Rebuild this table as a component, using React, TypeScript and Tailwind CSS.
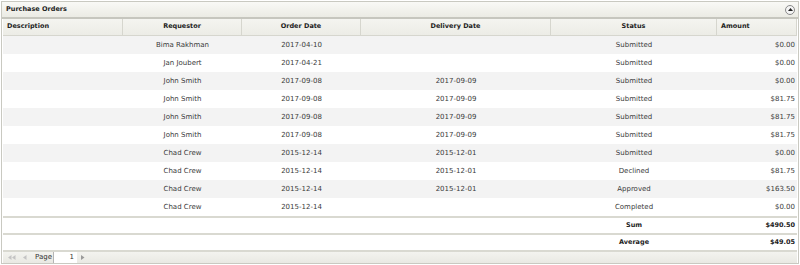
import React from 'react';

interface OrderRow {
  requestor: string;
  orderDate: string;
  deliveryDate: string;
  status: string;
  amount: string;
}

const rows: OrderRow[] = [
  { requestor: 'Bima Rakhman', orderDate: '2017-04-10', deliveryDate: '', status: 'Submitted', amount: '$0.00' },
  { requestor: 'Jan Joubert', orderDate: '2017-04-21', deliveryDate: '', status: 'Submitted', amount: '$0.00' },
  { requestor: 'John Smith', orderDate: '2017-09-08', deliveryDate: '2017-09-09', status: 'Submitted', amount: '$0.00' },
  { requestor: 'John Smith', orderDate: '2017-09-08', deliveryDate: '2017-09-09', status: 'Submitted', amount: '$81.75' },
  { requestor: 'John Smith', orderDate: '2017-09-08', deliveryDate: '2017-09-09', status: 'Submitted', amount: '$81.75' },
  { requestor: 'John Smith', orderDate: '2017-09-08', deliveryDate: '2017-09-09', status: 'Submitted', amount: '$81.75' },
  { requestor: 'Chad Crew', orderDate: '2015-12-14', deliveryDate: '2015-12-01', status: 'Submitted', amount: '$0.00' },
  { requestor: 'Chad Crew', orderDate: '2015-12-14', deliveryDate: '2015-12-01', status: 'Declined', amount: '$81.75' },
  { requestor: 'Chad Crew', orderDate: '2015-12-14', deliveryDate: '2015-12-01', status: 'Approved', amount: '$163.50' },
  { requestor: 'Chad Crew', orderDate: '2015-12-14', deliveryDate: '', status: 'Completed', amount: '$0.00' },
];

const cols = 'grid grid-cols-[120px_119px_119px_190px_166px_80px]';

const App: React.FC = () => {
  return (
    <div className="w-[800px] h-[265px] bg-white p-[1px] font-['DejaVu_Sans',sans-serif] text-[7px]">
      <div className="h-[263px] border border-[#c9c9c1] flex flex-col">
        {/* Title bar */}
        <div className="h-[17px] shrink-0 flex items-center justify-between pl-[4px] pr-[3px] bg-gradient-to-b from-[#f9f9f6] to-[#ebebe4] border-b-2 border-[#c6c6be]">
          <span className="font-bold text-[6.5px] text-[#222]">Purchase Orders</span>
          <span className="w-[10px] h-[10px] rounded-full border border-[#8a8a8a] bg-[#f4f4f4] flex items-center justify-center">
            <svg width="5" height="3" viewBox="0 0 5 3">
              <path d="M0 3 L2.5 0 L5 3 Z" fill="#222" />
            </svg>
          </span>
        </div>

        <div className="flex-1 flex flex-col px-[1px]">
          {/* Header */}
          <div className={`${cols} h-[17px] shrink-0 bg-gradient-to-b from-[#f4f4f0] to-[#ecece6] border-b border-[#d6d6ce] font-bold text-[6.5px] text-[#222]`}>
            <div className="pl-[4px] flex items-center border-r border-[#d6d6ce]">Description</div>
            <div className="flex items-center justify-center border-r border-[#d6d6ce]">Requestor</div>
            <div className="flex items-center justify-center border-r border-[#d6d6ce]">Order Date</div>
            <div className="flex items-center justify-center border-r border-[#d6d6ce]">Delivery Date</div>
            <div className="flex items-center justify-center border-r border-[#d6d6ce]">Status</div>
            <div className="pl-[4px] flex items-center border-r border-[#d6d6ce]">Amount</div>
          </div>

          {/* Rows */}
          {rows.map((r, idx) => (
            <div
              key={idx}
              className={`${cols} h-[18px] shrink-0 items-center text-[#3a3a3a] ${idx % 2 === 0 ? 'bg-[#f3f3f3]' : 'bg-white'}`}
            >
              <div></div>
              <div className="text-center">{r.requestor}</div>
              <div className="text-center">{r.orderDate}</div>
              <div className="text-center">{r.deliveryDate}</div>
              <div className="text-center">{r.status}</div>
              <div className="text-right pr-[2px]">{r.amount}</div>
            </div>
          ))}

          {/* Totals */}
          <div className={`${cols} h-[17px] shrink-0 items-center border-t-2 border-[#d9d9d1] font-bold text-[6.5px] text-[#222]`}>
            <div></div>
            <div></div>
            <div></div>
            <div></div>
            <div className="text-center">Sum</div>
            <div className="text-right pr-[2px]">$490.50</div>
          </div>
          <div className={`${cols} h-[17px] shrink-0 items-center border-t-2 border-[#d9d9d1] font-bold text-[6.5px] text-[#222]`}>
            <div></div>
            <div></div>
            <div></div>
            <div></div>
            <div className="text-center">Average</div>
            <div className="text-right pr-[2px]">$49.05</div>
          </div>

          {/* Pager */}
          <div className="flex-1 flex items-stretch pl-[5px] border-t-2 border-[#d9d9d1] bg-gradient-to-b from-[#f3f3ef] to-[#e9e9e3] text-[#333]">
            <div className="flex items-center">
              <svg width="8" height="5" viewBox="0 0 8 5">
                <path d="M0 2.5 L3.5 0 L3.5 5 Z M4 2.5 L7.5 0 L7.5 5 Z" fill="#c4c4c4" />
              </svg>
            </div>
            <div className="flex items-center ml-[7px]">
              <svg width="4" height="5" viewBox="0 0 4 5">
                <path d="M0 2.5 L3.5 0 L3.5 5 Z" fill="#c4c4c4" />
              </svg>
            </div>
            <span className="flex items-center ml-[8px]">Page</span>
            <span className="w-[24px] ml-[1px] bg-white border-l border-[#b5b5b5] flex items-center justify-end pr-[3px]">1</span>
            <div className="flex items-center ml-[4px]">
              <svg width="4" height="5" viewBox="0 0 4 5">
                <path d="M0 0 L3.5 2.5 L0 5 Z" fill="#9a9a9a" />
              </svg>
            </div>
          </div>
        </div>
      </div>
    </div>
  );
};

export default App;
